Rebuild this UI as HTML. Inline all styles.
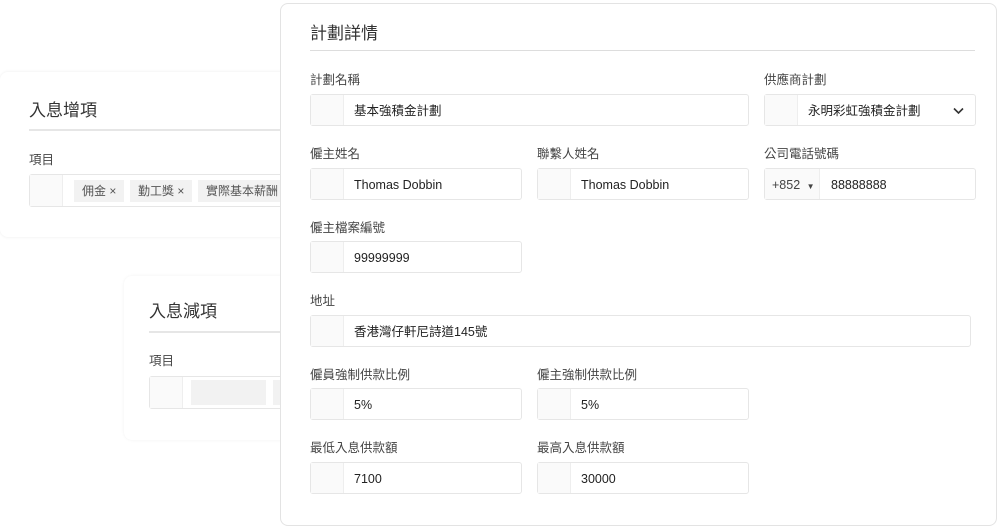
<!DOCTYPE html><html><head><meta charset="utf-8"><style>
body{margin:0;width:1000px;height:529px;background:#fff;position:relative;overflow:hidden;font-family:"Liberation Sans","Noto Sans CJK TC",sans-serif;color:#333}
.card{position:absolute;background:#fff;border-radius:8px}
.t{position:absolute;font-size:17px;color:#333}
.ln{position:absolute;height:2px;background:#e6e6e6}
.lb{position:absolute;font-size:12.5px;color:#444}
.in{position:absolute;height:32px;border:1px solid #e6e6e6;border-radius:3px;box-sizing:border-box;background:#fff;font-size:12.5px;line-height:32px;color:#222}
.in .ad{position:absolute;left:0;top:0;bottom:0;width:32px;background:#fafafa;border-right:1px solid #eee}
.in span.v{position:absolute;left:43px}
.tag{position:absolute;top:5px;height:22px;line-height:22px;background:#f2f2f2;font-size:12px;color:#555;padding:0 8px}
</style></head><body>
<div class="card" style="left:0;top:72px;width:290px;height:165px;box-shadow:0 0 3px rgba(0,0,0,.08)"></div>
<div class="t" style="left:29px;top:96px">入息增項</div>
<div class="ln" style="left:29px;top:129px;width:260px"></div>
<div class="lb" style="left:29px;top:149px">項目</div>
<div class="in" style="left:29px;top:174px;width:270px;height:33px"><div class="ad"></div>
<div class="tag" style="left:44px">佣金 ×</div><div class="tag" style="left:100px">勤工獎 ×</div><div class="tag" style="left:168px">實際基本薪酬</div></div>
<div class="card" style="left:124px;top:276px;width:170px;height:164px;box-shadow:0 0 3px rgba(0,0,0,.06)"></div>
<div class="t" style="left:149px;top:297px">入息減項</div>
<div class="ln" style="left:149px;top:331px;width:140px"></div>
<div class="lb" style="left:149px;top:350px">項目</div>
<div class="in" style="left:149px;top:376px;width:150px;height:33px"><div class="ad"></div>
<div style="position:absolute;left:41px;top:3px;width:75px;height:25px;background:#f2f2f2"></div><div style="position:absolute;left:123px;top:3px;width:30px;height:25px;background:#f2f2f2"></div></div>

<div class="card" style="left:280px;top:3px;width:717px;height:523px;border:1px solid #e3e3e3;box-sizing:border-box"></div>
<div class="t" style="left:310px;top:19px">計劃詳情</div>
<div class="ln" style="left:310px;top:50px;width:665px;height:1px;background:#ddd"></div>

<div class="lb" style="left:310px;top:69px">計劃名稱</div>
<div class="in" style="left:310px;top:94px;width:439px"><div class="ad"></div><span class="v">基本強積金計劃</span></div>
<div class="lb" style="left:764px;top:69px">供應商計劃</div>
<div class="in" style="left:764px;top:94px;width:212px"><div class="ad"></div><span class="v">永明彩虹強積金計劃</span>
<svg style="position:absolute;right:11px;top:12px" width="11" height="8" viewBox="0 0 11 8"><path d="M1 1.5l4.5 4.5 4.5-4.5" fill="none" stroke="#333" stroke-width="1.6"/></svg></div>

<div class="lb" style="left:310px;top:143px">僱主姓名</div>
<div class="in" style="left:310px;top:168px;width:212px"><div class="ad"></div><span class="v">Thomas Dobbin</span></div>
<div class="lb" style="left:537px;top:143px">聯繫人姓名</div>
<div class="in" style="left:537px;top:168px;width:212px"><div class="ad"></div><span class="v">Thomas Dobbin</span></div>
<div class="lb" style="left:764px;top:143px">公司電話號碼</div>
<div class="in" style="left:764px;top:168px;width:212px"><div class="ad" style="width:54px;background:#fafafa"></div><span style="position:absolute;left:7px;color:#444">+852 <span style="font-size:8px;margin-left:3px">▼</span></span><span class="v" style="left:66px">88888888</span></div>

<div class="lb" style="left:310px;top:217px">僱主檔案編號</div>
<div class="in" style="left:310px;top:241px;width:212px"><div class="ad"></div><span class="v">99999999</span></div>

<div class="lb" style="left:310px;top:290px">地址</div>
<div class="in" style="left:310px;top:315px;width:661px"><div class="ad"></div><span class="v">香港灣仔軒尼詩道145號</span></div>

<div class="lb" style="left:310px;top:364px">僱員強制供款比例</div>
<div class="in" style="left:310px;top:388px;width:212px"><div class="ad"></div><span class="v">5%</span></div>
<div class="lb" style="left:537px;top:364px">僱主強制供款比例</div>
<div class="in" style="left:537px;top:388px;width:212px"><div class="ad"></div><span class="v">5%</span></div>

<div class="lb" style="left:310px;top:437px">最低入息供款額</div>
<div class="in" style="left:310px;top:462px;width:212px"><div class="ad"></div><span class="v">7100</span></div>
<div class="lb" style="left:537px;top:437px">最高入息供款額</div>
<div class="in" style="left:537px;top:462px;width:212px"><div class="ad"></div><span class="v">30000</span></div>
</body></html>
